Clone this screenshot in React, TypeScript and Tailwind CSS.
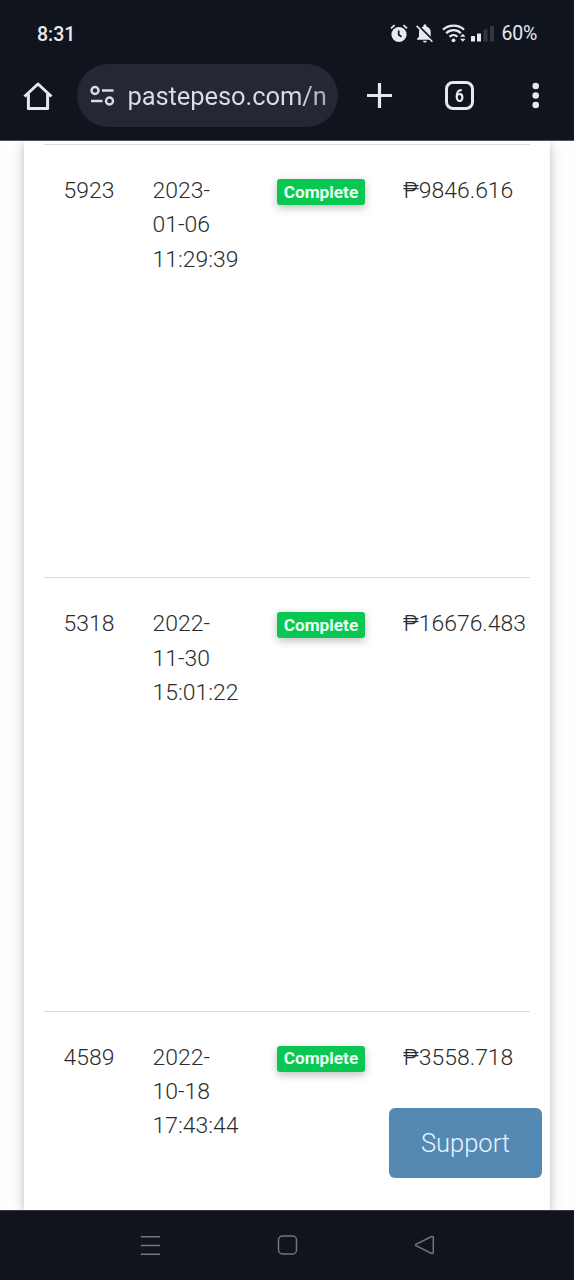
import React from 'react';

interface Withdrawal {
    id: string;
    date: string[];
    amount: string;
}

const withdrawals: Withdrawal[] = [
    { id: '5923', date: ['2023-', '01-06', '11:29:39'], amount: '9846.616' },
    { id: '5318', date: ['2022-', '11-30', '15:01:22'], amount: '16676.483' },
    { id: '4589', date: ['2022-', '10-18', '17:43:44'], amount: '3558.718' },
];

const StatusBar: React.FC = () => (
    <div className="flex h-16 items-center justify-between pt-1 pl-[37px] pr-[37px] text-[#e9e9ef]">
        <span className="pt-px text-[19.5px] font-medium">8:31</span>
        <div className="flex items-center">
            {/* Alarm */}
            <svg className="h-5 w-[18px]" viewBox="0 0 18 20">
                <circle cx="9" cy="10.5" r="7.6" fill="currentColor" />
                <path d="M1 4.3 4.6 1.100M17 4.300 13.400 1.100" stroke="currentColor" strokeWidth="1.800" fill="none" />
                <path d="M8.700 6.500v4.300l2.800 2" stroke="#10141d" strokeWidth="1.700" fill="none" />
            </svg>
            {/* Muted bell */}
            <svg className="ml-2 h-5 w-[18px]" viewBox="0 0 18 20">
                <path d="M7.400 2.500V1.800a1.500 1.500 0 0 1 3 0V2.500c2.600.6 4.300 2.700 4.300 5.400v4.800l2 2v1H1v-1l2-2V7.900C3 5.200 4.800 3.100 7.400 2.500z" fill="currentColor" />
                <path d="M7 16.700h3.800a1.900 1.900 0 0 1-3.800 0z" fill="currentColor" />
                <path d="M1.800 1.200 18 17.400" stroke="#10141d" strokeWidth="2.200" />
                <path d="M.6 1.900 16.400 17.700" stroke="currentColor" strokeWidth="1.600" />
            </svg>
            {/* Wifi with data arrows */}
            <svg className="ml-2 h-5 w-6" viewBox="0 0 24 20" fill="none" stroke="currentColor">
                <path d="M1 5.600c6-5.400 15.400-5.400 21 0M4.200 9.200c4.200-4 10.600-4 14.600 0M7.500 12.700c2.400-2.300 5.600-2.300 8 0" strokeWidth="2.200" />
                <circle cx="11.500" cy="16.300" r="1.900" fill="currentColor" stroke="none" />
                <path d="m18 12.800 2.800-3 2.800 3zM18 14.700l2.800 3 2.800-3z" fill="currentColor" stroke="none" />
            </svg>
            {/* Signal */}
            <svg className="ml-[5px] h-5 w-6" viewBox="0 0 24 20">
                <rect x="0" y="12" width="4" height="5.500" rx="0.500" fill="currentColor" />
                <rect x="6" y="9.500" width="4" height="8" rx="0.500" fill="currentColor" />
                <rect x="12.500" y="5.500" width="4" height="12" rx="0.500" fill="#343640" />
                <rect x="19" y="2" width="4" height="15.500" rx="0.500" fill="#343640" />
            </svg>
            <span className="ml-[6px] text-[19.5px] tracking-[-0.2px]">60%</span>
        </div>
    </div>
);

const Toolbar: React.FC = () => (
    <div className="flex h-[63px] items-center text-[#e8e6ee]">
        <svg className="ml-[23px] h-[30px] w-[30px]" viewBox="0 0 30 30" fill="none" stroke="currentColor" strokeWidth="3" strokeLinejoin="round">
            <path d="M1.500 15.500 15 3l13.500 12.500M5.400 13v14.400h19.200V13" />
        </svg>
        <div className="ml-6 flex h-[63px] w-[261px] items-center rounded-full bg-[#262735] pl-[13px] text-[#dcdce9]">
            <svg className="h-[22px] w-[25px] shrink-0" viewBox="0 0 25 22" fill="none" stroke="currentColor" strokeWidth="2.400">
                <circle cx="5" cy="5.500" r="3.500" />
                <circle cx="19.500" cy="16" r="3.500" />
                <path d="M12 5.500h11.500M1 16h11.500" />
            </svg>
            <span className="ml-[12.5px] w-[199px] overflow-hidden bg-gradient-to-r from-[#dcdce9] from-85% to-[#a6a6b5] bg-clip-text pt-0.5 text-[25.5px] tracking-[-0.08px] whitespace-nowrap text-transparent">pastepeso.com/n</span>
        </div>
        <svg className="ml-[28px] h-[27px] w-[27px]" viewBox="0 0 27 27" stroke="currentColor" strokeWidth="3.200">
            <path d="M1 13.500h25M13.500 1v25" />
        </svg>
        <div className="ml-[52px] flex h-[29px] w-[29px] items-center justify-center rounded-[8px] border-[3px] border-current text-[19px] leading-none font-bold">
            <span className="scale-x-[0.82]">6</span>
        </div>
        <svg className="ml-[58px] h-[27px] w-2" viewBox="0 0 8 27" fill="currentColor">
            <circle cx="3.700" cy="4" r="3.300" />
            <circle cx="3.700" cy="13.500" r="3.300" />
            <circle cx="3.700" cy="23" r="3.300" />
        </svg>
    </div>
);

const WithdrawalRow: React.FC<Withdrawal> = ({ id, date, amount }) => (
    <div className="flex h-[433.3px] shrink-0 border-t-[1.6px] border-[#d9dbdd] pt-[29px] pl-[19.5px]">
        <div className="w-[89px]">{id}</div>
        <div className="w-[124.5px]">
            {date.map((part) => <div key={part}>{part}</div>)}
        </div>
        <div className="w-[126px]">
            <span className="mt-[5px] flex h-[26px] w-[88px] items-center justify-center rounded-[3px] bg-[#08c853] pt-px text-[17.2px] leading-none font-bold text-[#eafff2] shadow-[0_3px_8px_rgba(0,0,0,0.25)]">Complete</span>
        </div>
        <div className="whitespace-nowrap">₱{amount}</div>
    </div>
);

const NavBar: React.FC = () => (
    <div className="flex h-[70px] shrink-0 items-center border-t border-[#373842] bg-[#10141d] text-[#74767b]">
        <svg className="ml-[140px] h-[22px] w-[21px]" viewBox="0 0 21 22" stroke="currentColor" strokeWidth="1.500">
            <path d="M.8 1.700h19.400M.8 10.500h19.400M.8 19.300h19.400" />
        </svg>
        <svg className="ml-[116px] h-[21px] w-[21px]" viewBox="0 0 21 21" fill="none" stroke="currentColor" strokeWidth="1.500">
            <rect x="1.500" y="1" width="18" height="18" rx="4" />
        </svg>
        <svg className="ml-[116px] h-[21px] w-[21px]" viewBox="0 0 21 21" fill="none" stroke="currentColor" strokeWidth="1.500" strokeLinejoin="round">
            <path d="M17.800 1.500 2.300 9.100Q.9 10 2.300 10.900L17.800 18.500Q19.300 19 19.300 17.500V2.500Q19.300 1 17.800 1.500z" />
        </svg>
    </div>
);

const App: React.FC = () => {
    return (
        <div className="flex h-[1280px] w-[574px] flex-col overflow-hidden bg-white font-['Roboto',sans-serif]">
            <header className="h-[141px] shrink-0 border-b border-[#55535b] bg-[#10141d]">
                <StatusBar />
                <Toolbar />
            </header>

            <main className="relative flex min-h-0 flex-1 overflow-hidden bg-[#fefefe]">
                <div className="ml-6 flex w-[526px] flex-col bg-white px-5 pt-[3px] text-[22.95px] leading-[34.4px] font-light text-[#2b2c2e] shadow-[0_3px_8px_rgba(0,0,0,0.16),0_3px_16px_rgba(0,0,0,0.12)]">
                    {withdrawals.map((row) => <WithdrawalRow key={row.id} {...row} />)}
                </div>
                {/* Floating support button */}
                <button className="absolute right-8 bottom-8 h-[70px] w-[153px] rounded-[6px] bg-[#5489b4] text-[25.5px] font-light text-[#e8f6ff]">Support</button>
            </main>

            <NavBar />
        </div>
    );
};

export default App;
